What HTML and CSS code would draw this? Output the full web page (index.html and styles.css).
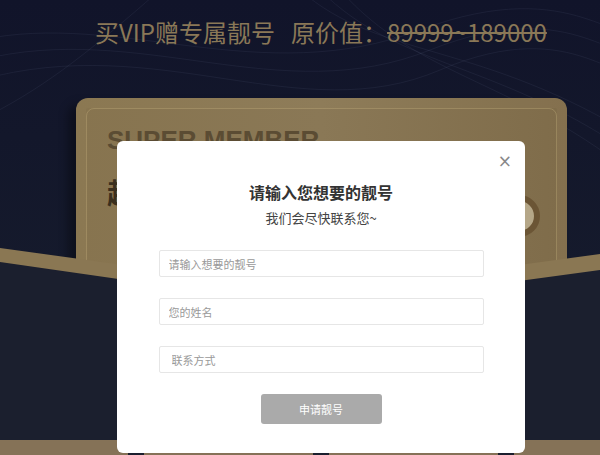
FILE: index.html
```html
<!DOCTYPE html>
<html lang="zh">
<head>
  <meta charset="UTF-8">
  <title>超级会员 - 专属靓号</title>
  <link rel="stylesheet" href="styles.css">
</head>
<body>
  <div class="page">
    <svg class="waves" width="600" height="260" viewBox="0 0 600 260">
      <path d="M-20 40 C 120 10, 260 90, 420 30 S 620 60, 640 20" />
      <path d="M-20 60 C 140 20, 280 110, 430 50 S 620 80, 640 40" />
      <path d="M-20 80 C 160 30, 300 130, 440 70 S 620 100, 640 60" />
      <path d="M300 -10 C 380 60, 480 40, 640 140" />
      <path d="M320 -10 C 400 70, 500 60, 640 160" />
      <path d="M340 -10 C 420 80, 520 80, 640 180" />
      <path d="M-20 120 C 40 90, 80 60, 160 -10" />
    </svg>

    <h1 class="headline">买VIP赠专属靓号<span class="gap"></span>原价值：<s>89999~189000</s></h1>

    <div class="card">
      <div class="card-en">SUPER MEMBER</div>
      <div class="card-cn">超级会员</div>
      <div class="card-ring"></div>
    </div>

    <!-- 卡套（前景） -->
    <svg class="pocket" width="600" height="210" viewBox="0 0 600 210">
      <polygon class="pocket-edge" points="0,0 320,44 600,6 600,210 0,210" />
      <polygon class="pocket-body" points="0,14 320,60 600,22 600,210 0,210" />
      <rect class="pocket-base" x="0" y="192" width="600" height="18" />
      <rect class="pocket-tab" x="128" y="203" width="16" height="7" rx="2" />
      <rect class="pocket-tab" x="313" y="203" width="16" height="7" rx="2" />
      <rect class="pocket-tab" x="498" y="203" width="16" height="7" rx="2" />
    </svg>

    <div class="modal">
      <span class="close">&times;</span>
      <h2>请输入您想要的靓号</h2>
      <p class="sub">我们会尽快联系您~</p>
      <form class="form">
        <input type="text" placeholder="请输入想要的靓号">
        <input type="text" placeholder="您的姓名">
        <input type="text" class="contact" placeholder="联系方式">
        <button type="button" class="btn-apply">申请靓号</button>
      </form>
    </div>
  </div>
</body>
</html>
```

FILE: styles.css
```css
body {
  margin: 0;
  background: #12152a;
  font-family: "Noto Sans CJK SC", "Noto Sans", sans-serif;
}

.page {
  position: relative;
  width: 600px;
  height: 455px;
  overflow: hidden;
  background: linear-gradient(180deg, #11142a 0%, #151a2c 60%, #1a1e2e 100%);
}

.waves {
  position: absolute;
  left: 0;
  top: 0;
}

.waves path {
  fill: none;
  stroke: rgba(150, 160, 200, 0.08);
  stroke-width: 1;
}

.headline {
  position: relative;
  margin: 0 0 0 95px;
  padding-top: 17px;
  font-size: 24px;
  line-height: 30px;
  font-weight: 400;
  color: #8a7857;
  white-space: nowrap;
}

.headline .gap {
  display: inline-block;
  width: 16px;
}

.headline s {
  text-decoration-thickness: 2px;
}

.card {
  position: relative;
  margin: 51px 0 0 76px;
  width: 491px;
  height: 200px;
  border-radius: 12px;
  background: linear-gradient(90deg, #87744f 0%, #8a7856 50%, #7f6c4a 100%);
  box-shadow: -8px 6px 10px rgba(0, 0, 0, 0.35), inset 0 0 0 10px rgba(255, 235, 190, 0.04);
  padding: 27px 0 0 31px;
  box-sizing: border-box;
}

.card::after {
  content: "";
  position: absolute;
  left: 10px;
  right: 10px;
  top: 10px;
  bottom: 0;
  border: 1px solid rgba(200, 180, 130, 0.35);
  border-radius: 8px;
}

.card-en {
  font-family: "Liberation Sans", Arial, sans-serif;
  font-weight: 700;
  font-size: 26px;
  line-height: 30px;
  color: #5b4c33;
}

.card-cn {
  margin-top: 17px;
  font-size: 28px;
  font-weight: 700;
  color: #3a2f1e;
}

.card-ring {
  position: absolute;
  right: 27px;
  top: 97px;
  width: 30px;
  height: 30px;
  border-radius: 50%;
  border: 6px solid #6b5535;
  background: #b5a788;
}

.pocket {
  position: absolute;
  left: 0;
  top: 248px;
}

.pocket-edge {
  fill: #8a7753;
}

.pocket-body {
  fill: #1b1f2e;
}

.pocket-base {
  fill: #857257;
}

.pocket-tab {
  fill: #1b1f2e;
}

.modal {
  position: absolute;
  left: 117px;
  top: 141px;
  width: 408px;
  height: 312px;
  background: #fff;
  border-radius: 6px;
  text-align: center;
}

.close {
  position: absolute;
  right: 13px;
  top: 10px;
  font-family: "DejaVu Sans", sans-serif;
  font-size: 17px;
  line-height: 20px;
  color: #888;
  cursor: pointer;
}

.modal h2 {
  margin: 40px 0 0;
  font-size: 16px;
  line-height: 22px;
  font-weight: 700;
  color: #333;
}

.sub {
  margin: 6px 0 0;
  font-size: 13px;
  line-height: 18px;
  color: #444;
}

.form {
  display: flex;
  flex-direction: column;
  align-items: center;
  margin-top: 23px;
}

.form input {
  width: 325px;
  height: 27px;
  box-sizing: border-box;
  border: 1px solid #e6e6e6;
  border-radius: 2px;
  padding: 0 9px;
  margin-bottom: 21px;
  font-family: inherit;
  font-size: 11px;
  color: #333;
  outline: none;
}

.form input::placeholder {
  color: #999;
}

.form input.contact {
  padding-left: 12px;
}

.btn-apply {
  width: 121px;
  height: 30px;
  border: none;
  border-radius: 3px;
  background: #aaa;
  color: #fff;
  font-family: inherit;
  font-size: 11px;
  cursor: pointer;
}
```
